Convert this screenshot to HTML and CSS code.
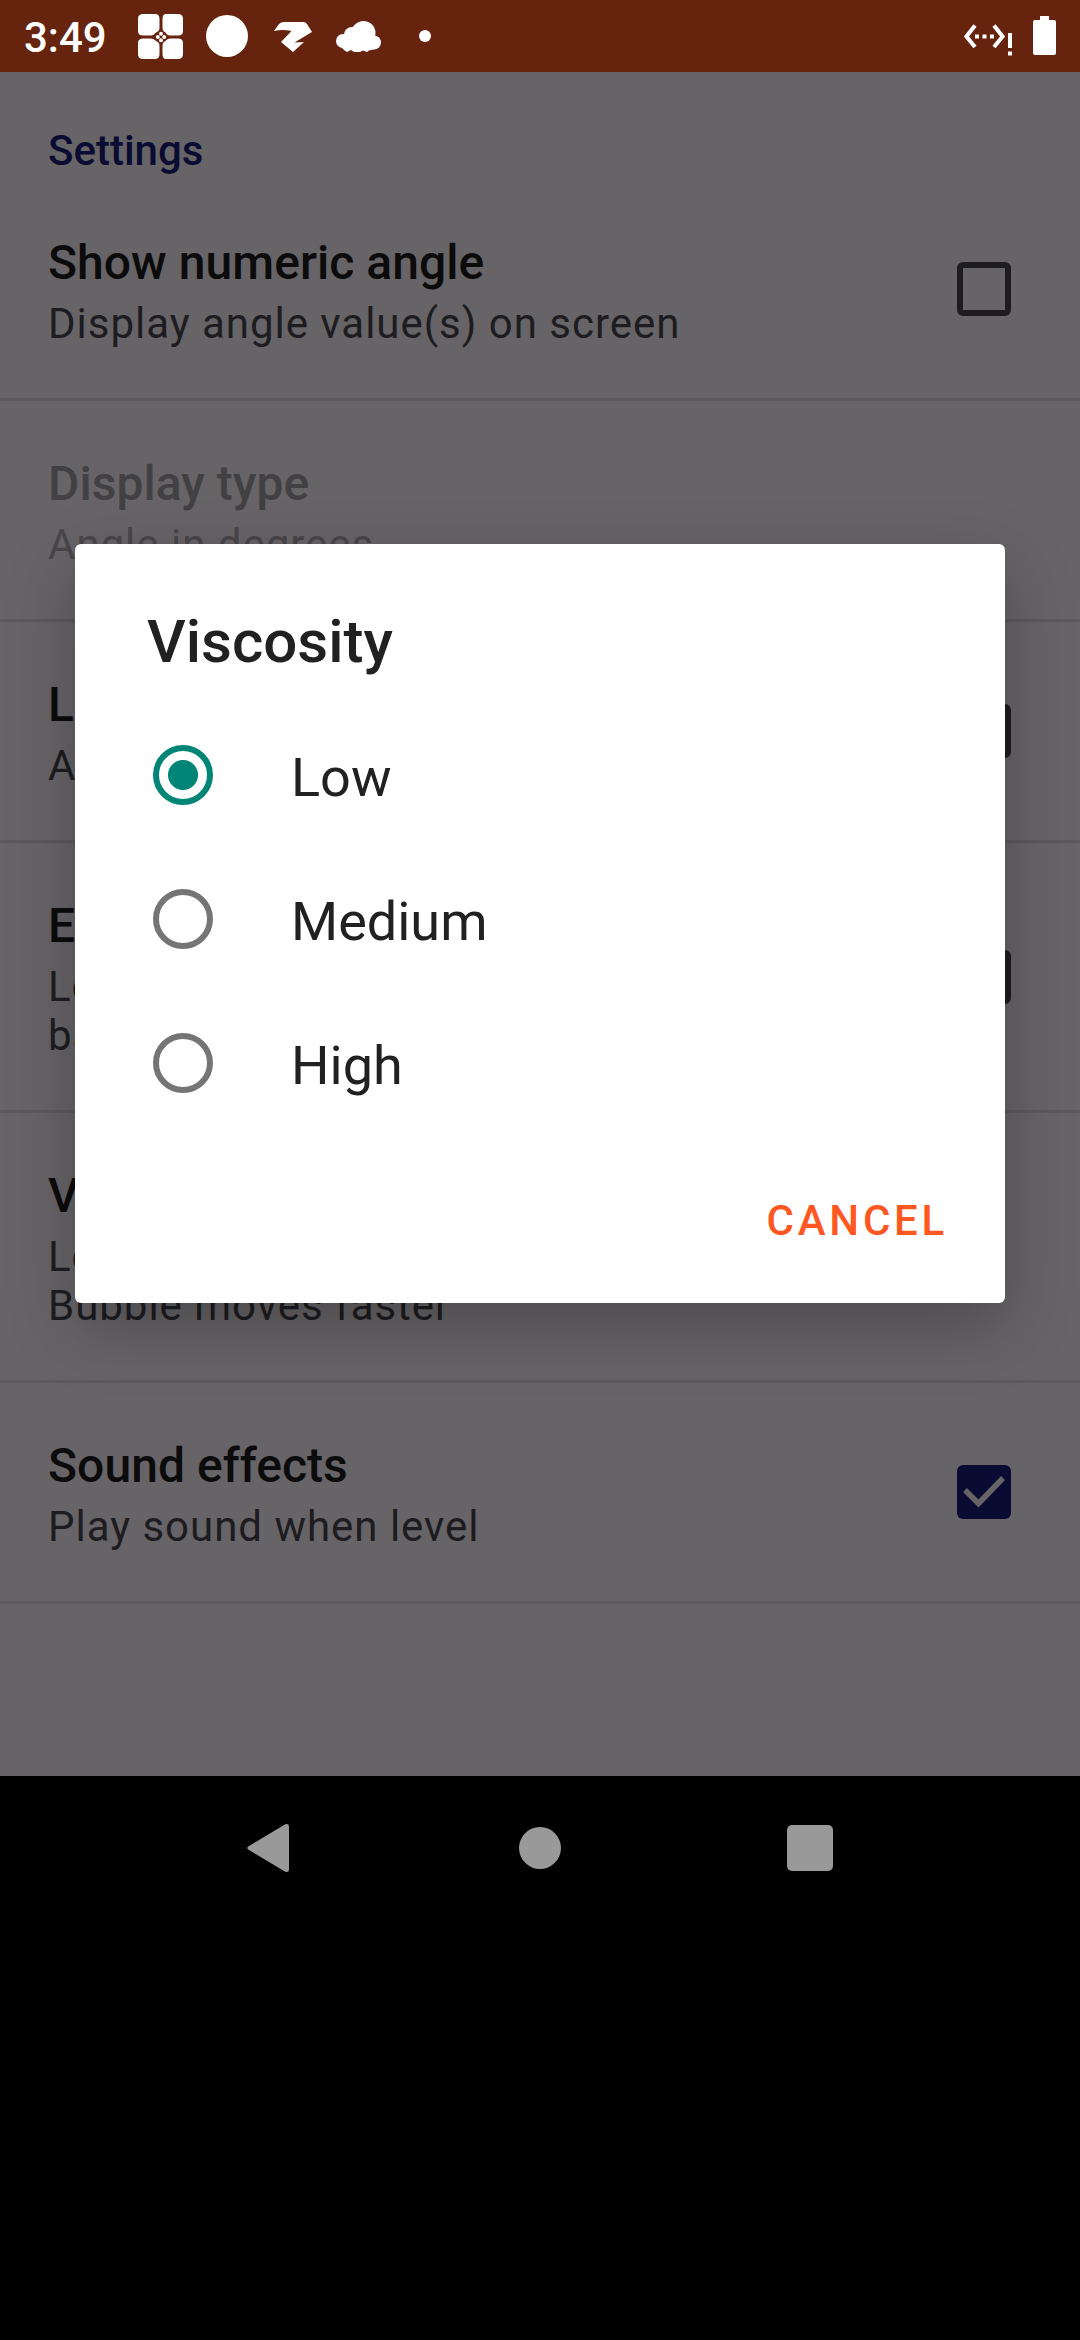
FILE: index.html
```html
<!DOCTYPE html>
<html lang="en">
<head>
<meta charset="utf-8">
<title>Settings</title>
<link rel="stylesheet" href="styles.css">
</head>
<body>
<div class="screen">
  <header class="status">
    <span class="clock">3:49</span>
    <svg class="ic-petals" width="45" height="45" viewBox="0 0 45 45" fill="#fff">
      <path d="M5 0H17Q21.500 0 21.500 5V14Q21.500 17 18 18.500Q16 21.500 13 21.500H5Q0 21.500 0 17V5Q0 0 5 0Z"/>
      <path d="M40 0H28Q24.500 0 24.500 5V14Q24.500 17 27.500 18.500Q29 21.500 32 21.500H40Q45 21.500 45 17V5Q45 0 40 0Z"/>
      <path d="M5 45H17Q21.500 45 21.500 40V32Q21.500 28 18 27Q16 24.500 13 24.500H5Q0 24.500 0 29V40Q0 45 5 45Z"/>
      <path d="M40 45H28Q24.500 45 24.500 40V32Q24.500 28 27.500 27Q29 24.500 32 24.500H40Q45 24.500 45 29V40Q45 45 40 45Z"/>
      <circle cx="23" cy="19.800" r="2"/><circle cx="23" cy="26.200" r="2"/><circle cx="19.800" cy="23" r="2"/><circle cx="26.200" cy="23" r="2"/>
    </svg>
    <svg class="ic-circle" width="42" height="42" viewBox="0 0 42 42"><circle cx="21" cy="21" r="21" fill="#fff"/></svg>
    <svg class="ic-bolt" width="38" height="30" viewBox="0 0 38 30" fill="#fff"><path d="M0 9L5 2Q7 0 10 0H29Q32 0 33 2L38 10L20.500 20.500L30 20L19 30L7 20L17.500 9Q9 7 0 9Z"/></svg>
    <svg class="ic-cloud" width="45" height="31" viewBox="0 0 45 31" fill="#fff"><circle cx="7" cy="20" r="7"/><circle cx="16" cy="14" r="8"/><circle cx="27.500" cy="12" r="12"/><circle cx="38" cy="21.500" r="7"/><path d="M3 22L7 17H38L39 28L33 29.500L31 31L27 29.500L24 31H18L15 29L11 31L8 29L6 27Z"/></svg>
    <svg class="ic-dot" width="12" height="12" viewBox="0 0 12 12"><circle cx="6" cy="6" r="6" fill="#fff"/></svg>
    <svg class="ic-net" width="49" height="32" viewBox="0 0 49 32" fill="#fff"><path d="M12 1.500L3.400 12.500L12 23M31 1.500L39.600 12.500L31 23" fill="none" stroke="#fff" stroke-width="4"/><path d="M12 10.500h4v4h-4zM19.500 10.500h4v4h-4zM27 10.500h4v4h-4zM45 9h4v15h-4zM45 27.500h4v4h-4z"/></svg>
    <svg class="ic-battery" width="23" height="39" viewBox="0 0 23 39"><path d="M7 0H16V4H21Q23 4 23 6V37Q23 39 21 39H2Q0 39 0 37V6Q0 4 2 4H7Z" fill="#fff"/></svg>
  </header>

  <main class="settings">
    <h1 class="category">Settings</h1>
    <section class="row">
      <div class="label"><div class="title">Show numeric angle</div><div class="summary">Display angle value(s) on screen</div></div>
      <span class="check"></span>
    </section>
    <section class="row disabled">
      <div class="label"><div class="title">Display type</div><div class="summary">Angle in degrees</div></div>
    </section>
    <section class="row">
      <div class="label"><div class="title">Lock</div><div class="summary">Angle</div></div>
      <span class="check"></span>
    </section>
    <section class="row">
      <div class="label"><div class="title">Eco</div><div class="summary">Low<br>battery</div></div>
      <span class="check"></span>
    </section>
    <section class="row">
      <div class="label"><div class="title">Viscosity</div><div class="summary">Low<br>Bubble moves faster</div></div>
    </section>
    <section class="row">
      <div class="label"><div class="title">Sound effects</div><div class="summary">Play sound when level</div></div>
      <span class="check checked"><svg width="54" height="54" viewBox="0 0 54 54"><path d="M8 25L21.500 38.500L46 13" fill="none" stroke="#666466" stroke-width="5.500"/></svg></span>
    </section>
  </main>

  <nav class="navbar">
    <span><svg width="48" height="48" viewBox="0 0 48 48"><path d="M3 22L38 1Q43 -1.500 43 3V45Q43 49.500 38 47L3 26Q-.5 24 3 22Z" fill="#999"/></svg></span>
    <span><svg width="42" height="42" viewBox="0 0 42 42"><circle cx="21" cy="21" r="21" fill="#999"/></svg></span>
    <span><svg width="46" height="46" viewBox="0 0 46 46"><rect width="46" height="46" rx="5" fill="#999"/></svg></span>
  </nav>

  <div class="dialog" role="dialog">
    <h2 class="dialog-title">Viscosity</h2>
    <div class="option"><span class="radio on"></span><span class="option-text">Low</span></div>
    <div class="option"><span class="radio"></span><span class="option-text">Medium</span></div>
    <div class="option"><span class="radio"></span><span class="option-text">High</span></div>
    <div class="actions"><span class="cancel">CANCEL</span></div>
  </div>
</div>
</body>
</html>
```
FILE: styles.css
```css
* { box-sizing: border-box; }
body { margin: 0; background: #000; font-family: Roboto, "Liberation Sans", sans-serif; }
svg { display: block; flex: none; }
h1, h2 { margin: 0; font-weight: 500; }
.screen { position: relative; width: 1080px; height: 2340px; background: #000; overflow: hidden; }

.status { height: 72px; background: #66230e; display: flex; align-items: center; padding: 0 24px; color: #fff; }
.clock { width: 114px; font-size: 42px; font-weight: 500; line-height: 49px; padding-top: 2px; }
.ic-circle { margin-left: 23px; }
.ic-bolt { margin: 2px 0 0 26px; }
.ic-cloud { margin-left: 24px; }
.ic-dot { margin-left: 38px; }
.ic-net { margin: 7px 21px 0 auto; }
.ic-battery { margin-top: -2px; }

.settings { height: 1704px; background: #666466; overflow: hidden; }
.category { padding: 54px 48px 5px; font-size: 42px; line-height: 49px; color: #0a0b32; }
.row { display: flex; align-items: center; justify-content: space-between; padding: 0 69px 0 48px; border-bottom: 3px solid #5b595b; }
.label { padding: 55px 0 50px; }
.title { font-size: 48px; font-weight: 500; line-height: 56px; letter-spacing: 0.05px; color: #0b0b0c; }
.summary { margin-top: 8px; font-size: 42px; line-height: 49px; letter-spacing: 0.98px; color: #1d1c20; white-space: nowrap; }
.disabled .title { color: #414042; }
.disabled .summary { color: #484649; }
.check { width: 54px; height: 54px; border: 6px solid #1d1c20; border-radius: 6px; }
.checked { border: 0; background: #0a0b32; }

.navbar { height: 144px; display: grid; grid-template-columns: repeat(3, 180px); column-gap: 90px; justify-content: center; }
.navbar span { display: flex; align-items: center; justify-content: center; }

.dialog { position: absolute; left: 75px; top: 544px; width: 930px; height: 759px; background: #fff; border-radius: 6px; color: #212121; display: flex; flex-direction: column; box-shadow: 0 24px 66px rgba(0, 0, 0, 0.25); }
.dialog-title { padding: 63px 72px 26px; font-size: 60px; line-height: 70px; }
.option { height: 144px; display: flex; align-items: center; padding-left: 78px; }
.option-text { padding-top: 5px; font-size: 54px; line-height: 64px; }
.radio { width: 60px; height: 60px; margin-right: 78px; border: 6px solid #757575; border-radius: 50%; }
.on { border-color: #008577; background: radial-gradient(circle, #008577 14.500px, transparent 15.500px); }
.actions { display: flex; justify-content: flex-end; padding: 61px 57px 0 0; }
.cancel { font-size: 42px; font-weight: 500; line-height: 49px; letter-spacing: 3.75px; color: #ff5722; }
```
